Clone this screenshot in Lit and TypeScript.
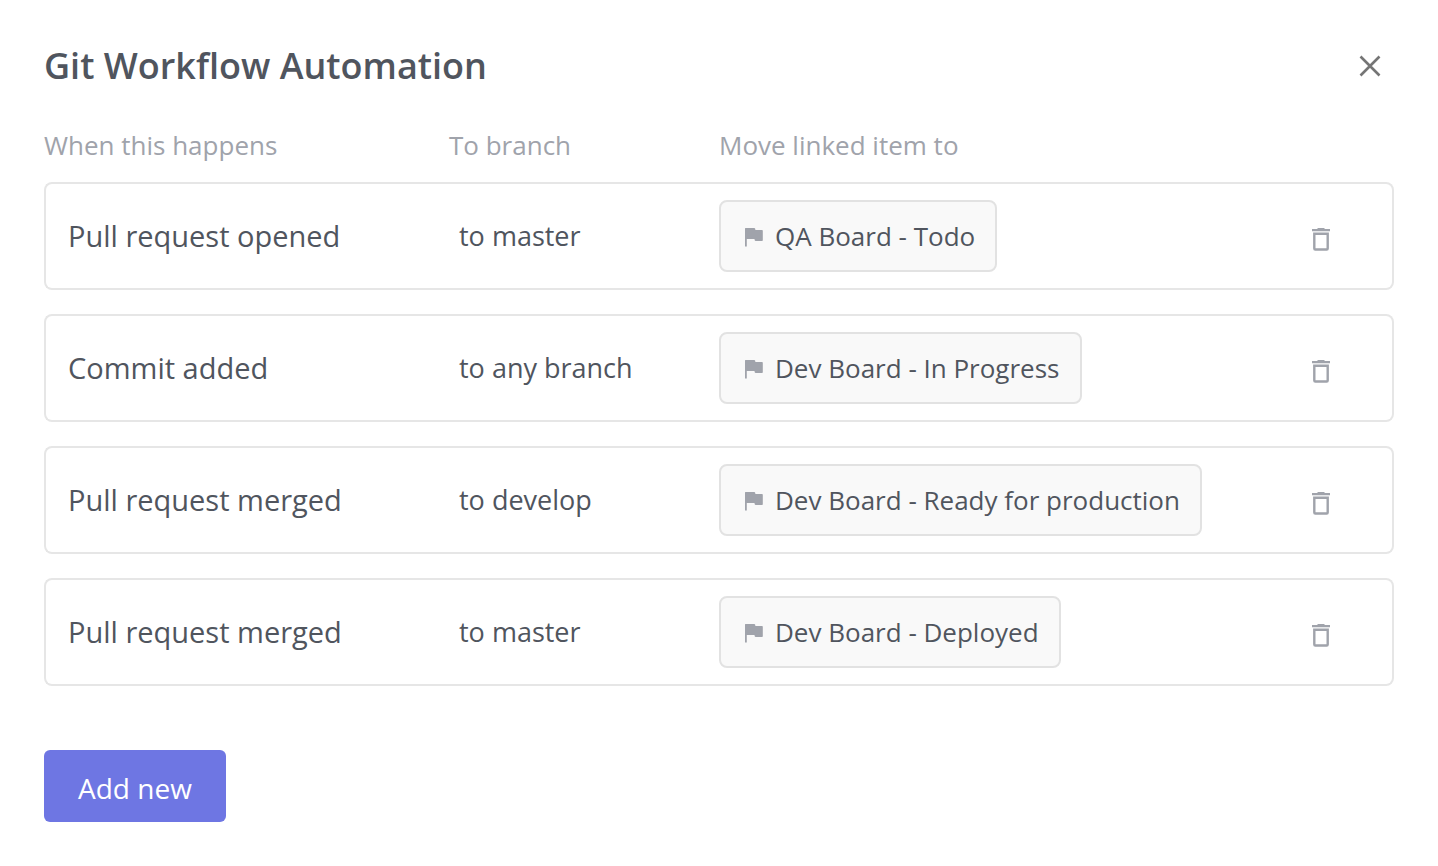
import { LitElement, html, css } from "lit";
import { customElement, state } from "lit/decorators.js";

interface Rule {
  id: number;
  event: string;
  branch: string;
  target: string;
}

@customElement("app-root")
export class AppRoot extends LitElement {
  static styles = css`
    :host {
      display: block;
      min-height: 100vh;
      box-sizing: border-box;
      padding: 40px 44px 44px;
      background: #fff;
      color: #50555e;
      font-family: "Open Sans", "Noto Sans", sans-serif;
    }
    button {
      font-family: inherit;
      border: 0;
      cursor: pointer;
    }
    .header {
      display: flex;
      align-items: center;
      justify-content: space-between;
    }
    .title {
      margin: 0;
      font-size: 36px;
      line-height: 52px;
      font-weight: 600;
    }
    .icon-button {
      display: inline-flex;
      padding: 8px;
      background: none;
      color: #a0a3ab;
    }
    .close {
      color: #757575;
    }
    .delete {
      padding-top: 14px;
      vertical-align: middle;
    }
    .rules {
      width: 100%;
      table-layout: fixed;
      border-collapse: separate;
      border-spacing: 0 24px;
      margin: 16px 0 40px;
    }
    .col-event {
      width: 30%;
    }
    .col-branch {
      width: 20%;
    }
    .col-action {
      width: 144px;
    }
    .label {
      padding: 0;
      text-align: left;
      font-size: 26px;
      line-height: 26px;
      font-weight: 400;
      color: #a0a3ab;
    }
    .cell {
      height: 72px;
      padding: 16px 0;
      border: solid #e6e6e6;
      border-width: 2px 0;
    }
    .event {
      padding-left: 22px;
      border-left-width: 2px;
      border-radius: 8px 0 0 8px;
      font-size: 29px;
      line-height: 40px;
    }
    .branch {
      padding-left: 10px;
      font-size: 27px;
      line-height: 40px;
    }
    .action {
      border-right-width: 2px;
      border-radius: 0 8px 8px 0;
      text-align: center;
    }
    .chip {
      display: inline-flex;
      align-items: center;
      gap: 8px;
      height: 72px;
      box-sizing: border-box;
      padding: 0 20px;
      border: 2px solid #e2e2e2;
      border-radius: 8px;
      background: #f9f9f9;
      color: inherit;
      font-size: 26px;
      line-height: 40px;
      vertical-align: middle;
      white-space: nowrap;
    }
    .flag {
      color: #a0a3ab;
    }
    .add {
      height: 72px;
      padding: 4px 34px 0;
      border-radius: 6px;
      background: #6e76e3;
      color: #fff;
      font-size: 28px;
      line-height: 40px;
    }
  `;

  @state() private rules: Rule[] = [
    { id: 1, event: "Pull request opened", branch: "to master", target: "QA Board - Todo" },
    { id: 2, event: "Commit added", branch: "to any branch", target: "Dev Board - In Progress" },
    { id: 3, event: "Pull request merged", branch: "to develop", target: "Dev Board - Ready for production" },
    { id: 4, event: "Pull request merged", branch: "to master", target: "Dev Board - Deployed" },
  ];

  private remove(id: number) {
    this.rules = this.rules.filter((rule) => rule.id !== id);
  }

  private row(rule: Rule) {
    return html`
      <tr>
        <td class="cell event">${rule.event}</td>
        <td class="cell branch">${rule.branch}</td>
        <td class="cell">
          <button class="chip" type="button">
            <svg class="flag" width="26" height="26" viewBox="0 0 26 26" fill="currentColor" aria-hidden="true">
              <path d="M4 5.500q0-.5.500-.5h8.700q.8 0 1 .8l.2 1.200H21q.8 0 .8.800v9.400q0 .8-.8.800h-6.300q-.8 0-1-.8l-.2-1.200H5.800V23.500H4z" />
            </svg>
            ${rule.target}
          </button>
        </td>
        <td class="cell action">
          <button class="icon-button delete" type="button" aria-label="Delete rule" @click=${() => this.remove(rule.id)}>
            <svg width="24" height="24" viewBox="0 0 24 24" aria-hidden="true">
              <path d="M3 2h5l1-1h6l1 1h5v2.200H3z" fill="currentColor" />
              <path d="M5.300 6.700h13.400v14.800q0 1-1 1h-11.400q-1 0-1-1z" fill="none" stroke="currentColor" stroke-width="2.400" />
            </svg>
          </button>
        </td>
      </tr>
    `;
  }

  render() {
    return html`
      <header class="header">
        <h1 class="title">Git Workflow Automation</h1>
        <button class="icon-button close" type="button" aria-label="Close">
          <svg width="32" height="32" viewBox="0 0 32 32" fill="none" stroke="currentColor" stroke-width="2.600" aria-hidden="true">
            <path d="M6.500 6.500l19 19M25.500 6.500l-19 19" />
          </svg>
        </button>
      </header>
      <table class="rules">
        <colgroup>
          <col class="col-event" />
          <col class="col-branch" />
          <col />
          <col class="col-action" />
        </colgroup>
        <thead>
          <tr>
            <th class="label" scope="col">When this happens</th>
            <th class="label" scope="col">To branch</th>
            <th class="label" scope="col">Move linked item to</th>
            <td></td>
          </tr>
        </thead>
        <tbody>
          ${this.rules.map((rule) => this.row(rule))}
        </tbody>
      </table>
      <button class="add" type="button">Add new</button>
    `;
  }
}
